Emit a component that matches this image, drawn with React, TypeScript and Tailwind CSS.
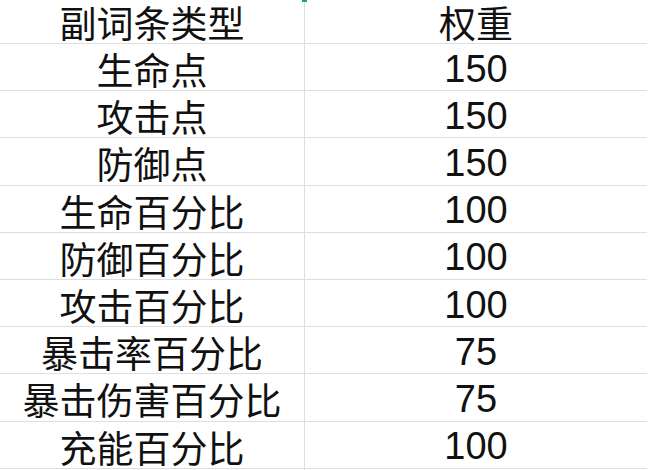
const ROWS: [string, string][] = [
  ["生命点", "150"],
  ["攻击点", "150"],
  ["防御点", "150"],
  ["生命百分比", "100"],
  ["防御百分比", "100"],
  ["攻击百分比", "100"],
  ["暴击率百分比", "75"],
  ["暴击伤害百分比", "75"],
  ["充能百分比", "100"],
];

const cjk = "font-['Noto_Sans_CJK_SC',sans-serif]";
const num = "font-['Liberation_Sans','Noto_Sans_CJK_SC',sans-serif]";

export default function App() {
  return (
    <div className="relative h-[470px] w-[660px] overflow-hidden bg-white text-[#111]">
      {/* little green selection mark at the top of the column divider */}
      <div className="absolute left-[302px] top-0 h-[2px] w-[5px] bg-[#1fa36a]" />

      <div className="w-[647px]">
        <div className="flex h-[44px] border-b border-[#dedede]">
          <div className={`flex w-[305px] items-center justify-center border-r border-[#dedede] text-[37px] leading-[40px] ${cjk}`}>
            副词条类型
          </div>
          <div className={`flex flex-1 items-center justify-center text-[37px] leading-[40px] ${cjk}`}>
            权重
          </div>
        </div>

        {ROWS.map(([name, weight]) => (
          <div key={name} className="flex h-[47.2px] border-b border-[#dedede]">
            <div className={`flex w-[305px] items-center justify-center border-r border-[#dedede] pt-[4px] text-[37px] leading-[40px] ${cjk}`}>
              {name}
            </div>
            <div className={`flex flex-1 items-center justify-center pt-[3px] text-[38px] leading-[40px] ${num}`}>
              {weight}
            </div>
          </div>
        ))}

        <div className="flex h-[4px]">
          <div className="w-[305px] border-r border-[#dedede]" />
        </div>
      </div>
    </div>
  );
}
